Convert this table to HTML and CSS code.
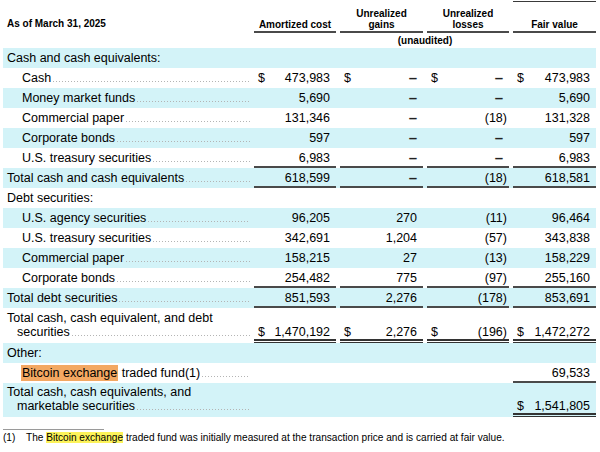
FILE: index.html
```html
<!DOCTYPE html>
<html lang="en">
<head>
<meta charset="utf-8">
<title>Marketable securities</title>
<link rel="stylesheet" href="styles.css">
</head>
<body>
<div class="sheet">
  <div class="head">
    <div class="hcell hlabel">As of March 31, 2025</div>
    <div class="hcell hcol">Amortized cost</div>
    <div class="hcell hcol">Unrealized<br>gains</div>
    <div class="hcell hcol">Unrealized<br>losses</div>
    <div class="hcell hcol htop">Fair value</div>
  </div>
  <div class="subhead"><div></div><div class="unaud">(unaudited)</div></div>

  <div class="row shade"><div class="lab">Cash and cash equivalents:</div></div>
  <div class="row">
    <div class="lab ind"><span>Cash</span><i class="dots"></i></div>
    <div class="n"><span>$</span><span>473,983</span></div>
    <div class="n"><span>$</span><span class="dash">–</span></div>
    <div class="n"><span>$</span><span class="dash">–</span></div>
    <div class="n"><span>$</span><span>473,983</span></div>
  </div>
  <div class="row shade">
    <div class="lab ind"><span>Money market funds</span><i class="dots"></i></div>
    <div class="n r">5,690</div><div class="n r"><span class="dash">–</span></div><div class="n r"><span class="dash">–</span></div><div class="n r">5,690</div>
  </div>
  <div class="row">
    <div class="lab ind"><span>Commercial paper</span><i class="dots"></i></div>
    <div class="n r">131,346</div><div class="n r"><span class="dash">–</span></div><div class="n r">(18<span class="rp">)</span></div><div class="n r">131,328</div>
  </div>
  <div class="row shade">
    <div class="lab ind"><span>Corporate bonds</span><i class="dots"></i></div>
    <div class="n r">597</div><div class="n r"><span class="dash">–</span></div><div class="n r"><span class="dash">–</span></div><div class="n r">597</div>
  </div>
  <div class="row">
    <div class="lab ind"><span>U.S. treasury securities</span><i class="dots"></i></div>
    <div class="n r u1">6,983</div><div class="n r u1"><span class="dash">–</span></div><div class="n r u1"><span class="dash">–</span></div><div class="n r u1">6,983</div>
  </div>
  <div class="row shade">
    <div class="lab"><span>Total cash and cash equivalents</span><i class="dots"></i></div>
    <div class="n r u1">618,599</div><div class="n r u1"><span class="dash">–</span></div><div class="n r u1">(18<span class="rp">)</span></div><div class="n r u1">618,581</div>
  </div>
  <div class="row"><div class="lab">Debt securities:</div></div>
  <div class="row shade">
    <div class="lab ind"><span>U.S. agency securities</span><i class="dots"></i></div>
    <div class="n r">96,205</div><div class="n r">270</div><div class="n r">(11<span class="rp">)</span></div><div class="n r">96,464</div>
  </div>
  <div class="row">
    <div class="lab ind"><span>U.S. treasury securities</span><i class="dots"></i></div>
    <div class="n r">342,691</div><div class="n r">1,204</div><div class="n r">(57<span class="rp">)</span></div><div class="n r">343,838</div>
  </div>
  <div class="row shade">
    <div class="lab ind"><span>Commercial paper</span><i class="dots"></i></div>
    <div class="n r">158,215</div><div class="n r">27</div><div class="n r">(13<span class="rp">)</span></div><div class="n r">158,229</div>
  </div>
  <div class="row">
    <div class="lab ind"><span>Corporate bonds</span><i class="dots"></i></div>
    <div class="n r u1">254,482</div><div class="n r u1">775</div><div class="n r u1">(97<span class="rp">)</span></div><div class="n r u1">255,160</div>
  </div>
  <div class="row shade">
    <div class="lab"><span>Total debt securities</span><i class="dots"></i></div>
    <div class="n r u1">851,593</div><div class="n r u1">2,276</div><div class="n r u1">(178<span class="rp">)</span></div><div class="n r u1">853,691</div>
  </div>
  <div class="row tall">
    <div class="lab2">
      <div class="l1">Total cash, cash equivalent, and debt</div>
      <div class="l2"><span>securities</span><i class="dots"></i></div>
    </div>
    <div class="n u2"><span>$</span><span>1,470,192</span></div>
    <div class="n u2"><span>$</span><span>2,276</span></div>
    <div class="n u2"><span>$</span><span>(196<span class="rp">)</span></span></div>
    <div class="n u2"><span>$</span><span>1,472,272</span></div>
  </div>
  <div class="row shade"><div class="lab">Other:</div></div>
  <div class="row">
    <div class="lab ind"><span><mark class="hl-o">Bitcoin exchange</mark> traded fund(1)</span><i class="dots"></i></div>
    <div></div><div></div><div></div>
    <div class="n r u1">69,533</div>
  </div>
  <div class="row tall tall2 shade">
    <div class="lab2">
      <div class="l1">Total cash, cash equivalents, and</div>
      <div class="l2"><span>marketable securities</span><i class="dots"></i></div>
    </div>
    <div></div><div></div><div></div>
    <div class="n u2"><span>$</span><span>1,541,805</span></div>
  </div>

  <div class="rule"></div>
  <div class="foot"><span class="fn">(1)</span><span>The <mark class="hl-y">Bitcoin exchange</mark> traded fund was initially measured at the transaction price and is carried at fair value.</span></div>
</div>
</body>
</html>
```

FILE: styles.css
```css
* { box-sizing: border-box; margin: 0; padding: 0; }

html, body { background: #ffffff; }

body {
  width: 600px;
  height: 452px;
  overflow: hidden;
  font-family: "Liberation Sans", Arial, Helvetica, sans-serif;
  color: #000000;
}

.sheet {
  width: 600px;
  padding: 1px 4px 0 3px;
}

.head, .subhead, .row {
  display: grid;
  grid-template-columns: 247px 82px 83px 82px 83px;
  column-gap: 4px;
}

/* header */
.head { height: 32px; }
.hcell {
  display: flex;
  flex-direction: column;
  justify-content: flex-end;
  font-size: 10px;
  font-weight: bold;
  line-height: 11px;
  padding-bottom: 1px;
  border-top: 1px solid transparent;
  border-bottom: 2px solid transparent;
}
.hlabel { padding-left: 4px; padding-bottom: 2px; }
.hcol { text-align: center; border-bottom-color: #4a4a4a; }
.htop { border-top-color: #3a3a3a; }

.subhead { height: 15px; }
.unaud {
  grid-column: 2 / 6;
  text-align: center;
  font-size: 10px;
  font-weight: bold;
  line-height: 13px;
  padding-top: 1px;
}

/* body rows */
.row {
  height: 20px;
  font-size: 12.5px;
  line-height: 20px;
}
.shade { background: #d3f3f8; }

.lab {
  display: flex;
  align-items: baseline;
  padding-left: 4px;
  white-space: nowrap;
}
.lab.ind { padding-left: 19px; }

.dots {
  flex: 1;
  height: 1px;
  margin-left: 2px;
  background-image: linear-gradient(to right, #b4b4b4 1px, transparent 1px);
  background-size: 3px 1px;
  background-repeat: repeat-x;
  background-position: left bottom;
}

.n {
  display: flex;
  justify-content: space-between;
  padding: 0 6px 0 4px;
  white-space: nowrap;
}
.n.r { justify-content: flex-end; }
.rp { margin-right: -4px; }
.dash {
  font-size: 15px;
  font-weight: bold;
  color: #222;
}

.u1 {
  background: linear-gradient(#4a4a4a, #4a4a4a) left bottom / 100% 2px no-repeat;
}
.u2 {
  background:
    linear-gradient(#333, #333) left bottom / 100% 1px no-repeat,
    linear-gradient(#333, #333) left calc(100% - 2px) / 100% 2px no-repeat;
}

/* two-line rows */
.tall { height: 35px; }
.tall2 { height: 34px; }
.lab2 {
  display: flex;
  flex-direction: column;
  justify-content: flex-end;
  line-height: 14px;
  padding: 0 0 4px 4px;
  white-space: nowrap;
}
.lab2 .l2 {
  display: flex;
  align-items: baseline;
  padding-left: 10px;
}
.tall .n {
  align-items: flex-end;
  line-height: 14px;
  padding-bottom: 4px;
}

mark { color: inherit; }
.hl-o {
  background: #f3a862;
  padding: 1px 1px;
  margin-left: -1px;
}
.hl-y { background: #fdf35a; }

/* footnote */
.rule {
  width: 101px;
  height: 1px;
  background: #9a9a9a;
  margin-top: 12px;
}
.foot {
  display: flex;
  font-size: 10.1px;
  line-height: 12px;
  margin-top: 2px;
  white-space: nowrap;
}
.fn { width: 23px; }
```
